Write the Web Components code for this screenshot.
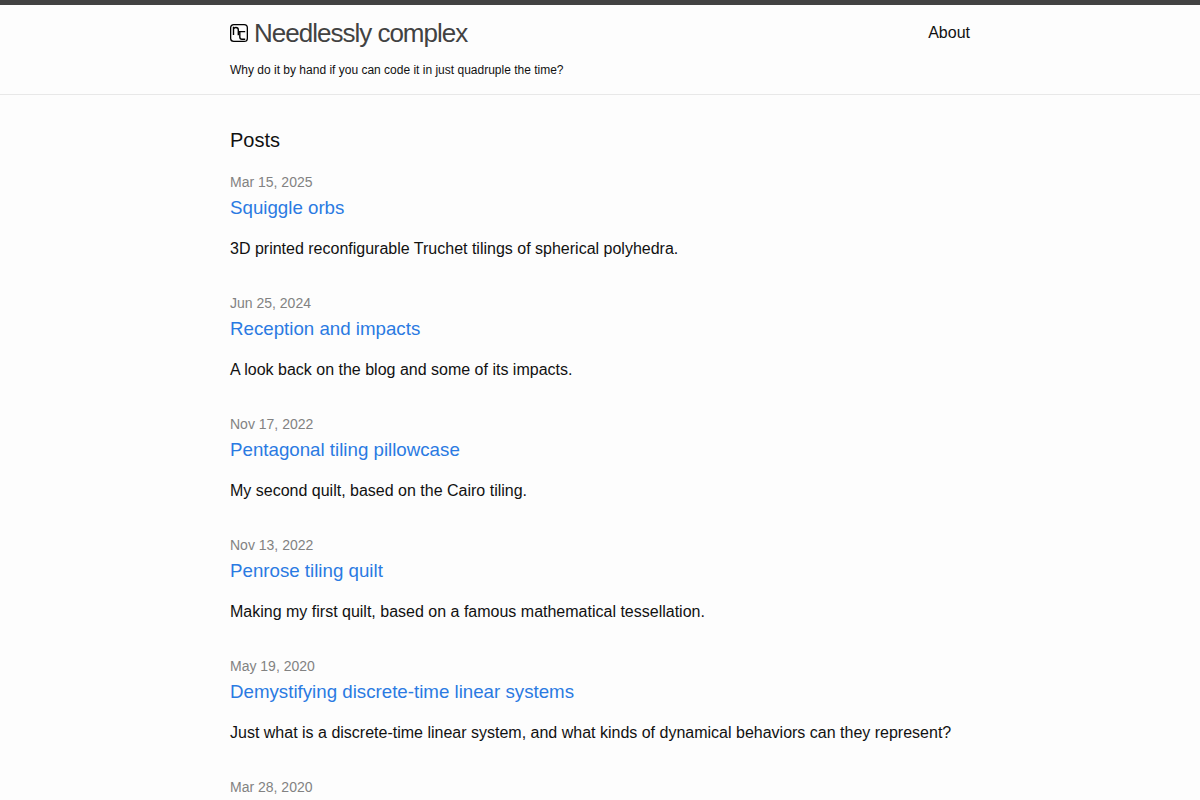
<!DOCTYPE html>
<html lang="en">
<head>
<meta charset="utf-8">
<meta name="viewport" content="width=device-width, initial-scale=1">
<title>Needlessly complex</title>
<style>
  body {
    margin: 0;
    background: #fdfdfd;
    color: #111;
    font: 16px/24px "Liberation Sans", Arial, sans-serif;
  }
</style>
</head>
<body>
<blog-header>
  Needlessly complex
  <span slot="tagline">Why do it by hand if you can code it in just quadruple the time?</span>
  <nav-link slot="nav" href="/about/">About</nav-link>
</blog-header>

<post-list heading="Posts">
  <post-item date="Mar 15, 2025" heading="Squiggle orbs" href="/squiggle-orbs/">3D printed reconfigurable Truchet tilings of spherical polyhedra.</post-item>
  <post-item date="Jun 25, 2024" heading="Reception and impacts" href="/reception/">A look back on the blog and some of its impacts.</post-item>
  <post-item date="Nov 17, 2022" heading="Pentagonal tiling pillowcase" href="/pentagonal-pillowcase/">My second quilt, based on the Cairo tiling.</post-item>
  <post-item date="Nov 13, 2022" heading="Penrose tiling quilt" href="/penrose-quilt/">Making my first quilt, based on a famous mathematical tessellation.</post-item>
  <post-item date="May 19, 2020" heading="Demystifying discrete-time linear systems" href="/linear-systems/">Just what is a discrete-time linear system, and what kinds of dynamical behaviors can they represent?</post-item>
  <post-item date="Mar 28, 2020"></post-item>
</post-list>

<template id="site-logo">
  <style>
    :host { display: block; width: 18px; height: 18px; color: #000; }
    svg { display: block; width: 100%; height: 100%; }
  </style>
  <svg viewBox="0 0 18 18" fill="none" stroke="currentColor" aria-hidden="true">
    <rect x=".65" y=".65" width="16.7" height="16.7" rx="3.2" stroke-width="1.3"/>
    <path d="M3.5 11V2.8M3.5 5C4.1 3.8 4.8 3.5 5.9 3.5C7.6 3.5 8.3 4.3 8.3 5.8V11.2M15.2 7.6H8.3M9.8 7.6V13C9.8 14.8 10.6 15.3 12 15.3H15.2" stroke-width="1.4"/>
  </svg>
</template>

<template id="nav-link">
  <style>
    :host { display: block; }
    a { color: inherit; text-decoration: none; }
    a:hover { text-decoration: underline; }
  </style>
  <a><slot></slot></a>
</template>

<template id="blog-header">
  <style>
    :host { display: block; border-top: 5px solid #424242; border-bottom: 1px solid #e8e8e8; }
    header { max-width: 740px; margin: 0 auto; padding: 0 30px 15px; }
    .bar { display: flex; justify-content: space-between; align-items: center; min-height: 56px; }
    .title {
      display: flex; align-items: center; gap: 6px;
      color: #424242; font-size: 26px; line-height: 56px; letter-spacing: -1px;
      text-decoration: none;
    }
    .tagline { font-size: 12px; line-height: 18px; }
    @media (max-width: 600px) { header { padding: 0 15px 15px; } }
  </style>
  <header>
    <div class="bar">
      <a class="title" href="/"><site-logo></site-logo><span><slot></slot></span></a>
      <nav><slot name="nav"></slot></nav>
    </div>
    <div class="tagline"><slot name="tagline"></slot></div>
  </header>
</template>

<template id="post-list">
  <style>
    :host { display: block; }
    main { max-width: 740px; margin: 0 auto; padding: 30px; }
    h2 { margin: 0 0 15px; font-size: 20px; line-height: 30px; font-weight: 400; }
    .posts { display: flex; flex-direction: column; gap: 30px; }
    @media (max-width: 600px) { main { padding: 30px 15px; } }
  </style>
  <main>
    <h2></h2>
    <div class="posts"><slot></slot></div>
  </main>
</template>

<template id="post-item">
  <style>
    :host { display: block; }
    time { display: block; color: #828282; font-size: 14px; line-height: 24px; }
    h3 { margin: 0 0 15px; line-height: 28px; font-weight: 400; }
    a { color: #2a7ae2; text-decoration: none; }
    a:hover { text-decoration: underline; }
    p { margin: 0; }
  </style>
  <article>
    <time></time>
    <h3><a></a></h3>
    <p><slot></slot></p>
  </article>
</template>

<script>
  class TemplateElement extends HTMLElement {
    constructor() {
      super();
      const template = document.getElementById(this.localName);
      this.attachShadow({ mode: "open" }).append(template.content.cloneNode(true));
    }
    find(selector) { return this.shadowRoot.querySelector(selector); }
  }

  class SiteLogo extends TemplateElement {}
  class BlogHeader extends TemplateElement {}

  class NavLink extends TemplateElement {
    connectedCallback() { this.find("a").href = this.getAttribute("href"); }
  }

  class PostList extends TemplateElement {
    connectedCallback() { this.find("h2").textContent = this.getAttribute("heading"); }
  }

  class PostItem extends TemplateElement {
    connectedCallback() {
      this.find("time").textContent = this.getAttribute("date");
      const heading = this.getAttribute("heading");
      if (!heading) {
        this.find("h3").remove();
        this.find("p").remove();
        return;
      }
      const link = this.find("a");
      link.textContent = heading;
      link.href = this.getAttribute("href");
    }
  }

  customElements.define("site-logo", SiteLogo);
  customElements.define("nav-link", NavLink);
  customElements.define("blog-header", BlogHeader);
  customElements.define("post-list", PostList);
  customElements.define("post-item", PostItem);
</script>
</body>
</html>
